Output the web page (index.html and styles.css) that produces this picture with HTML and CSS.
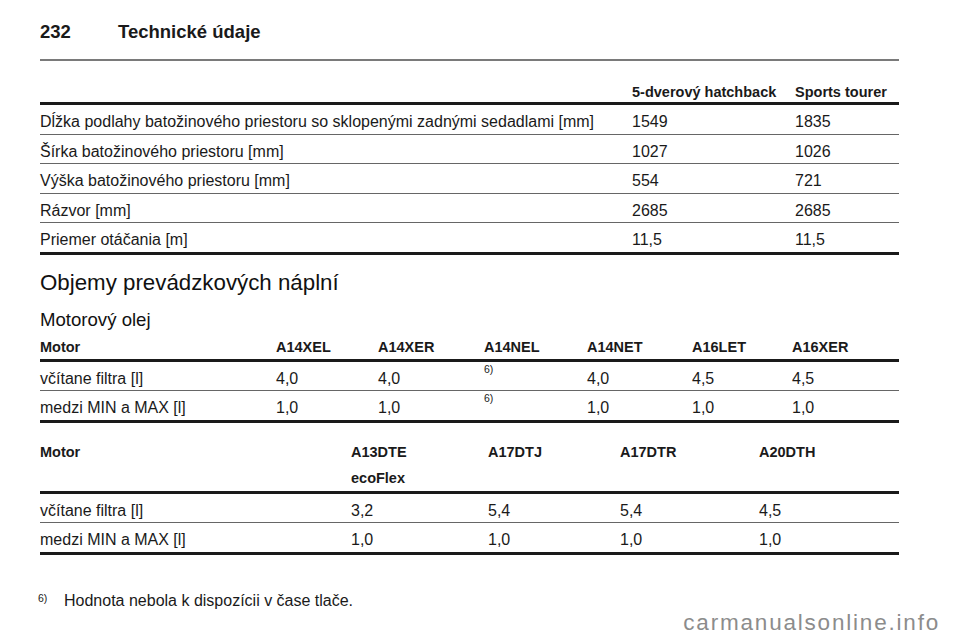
FILE: index.html
```html
<!DOCTYPE html>
<html lang="sk">
<head>
<meta charset="utf-8">
<title>Technické údaje</title>
<link rel="stylesheet" href="styles.css">
</head>
<body>
<div class="page">
  <header class="pagehead">
    <span class="pnum">232</span>
    <span class="ptitle">Technické údaje</span>
  </header>

  <table class="t t1">
    <colgroup><col class="w592"><col class="w163"><col class="w104"></colgroup>
    <thead>
      <tr><th></th><th>5-dverový hatchback</th><th>Sports tourer</th></tr>
    </thead>
    <tbody>
      <tr><td>Dĺžka podlahy batožinového priestoru so sklopenými zadnými sedadlami [mm]</td><td>1549</td><td>1835</td></tr>
      <tr><td>Šírka batožinového priestoru [mm]</td><td>1027</td><td>1026</td></tr>
      <tr><td>Výška batožinového priestoru [mm]</td><td>554</td><td>721</td></tr>
      <tr><td>Rázvor [mm]</td><td>2685</td><td>2685</td></tr>
      <tr><td>Priemer otáčania [m]</td><td>11,5</td><td>11,5</td></tr>
    </tbody>
  </table>

  <h2 class="h2">Objemy prevádzkových náplní</h2>
  <h3 class="h3">Motorový olej</h3>

  <table class="t t2">
    <colgroup><col class="w236"><col class="w102"><col class="w106"><col class="w103"><col class="w105"><col class="w100"><col class="w107"></colgroup>
    <thead>
      <tr><th>Motor</th><th>A14XEL</th><th>A14XER</th><th>A14NEL</th><th>A14NET</th><th>A16LET</th><th>A16XER</th></tr>
    </thead>
    <tbody>
      <tr><td>včítane filtra [l]</td><td>4,0</td><td>4,0</td><td class="fncell"><span class="fn">6)</span></td><td>4,0</td><td>4,5</td><td>4,5</td></tr>
      <tr><td>medzi MIN a MAX [l]</td><td>1,0</td><td>1,0</td><td class="fncell"><span class="fn">6)</span></td><td>1,0</td><td>1,0</td><td>1,0</td></tr>
    </tbody>
  </table>

  <table class="t t3">
    <colgroup><col class="w311"><col class="w137"><col class="w132"><col class="w139"><col class="w140"></colgroup>
    <thead>
      <tr><th>Motor</th><th>A13DTE<br>ecoFlex</th><th>A17DTJ</th><th>A17DTR</th><th>A20DTH</th></tr>
    </thead>
    <tbody>
      <tr><td>včítane filtra [l]</td><td>3,2</td><td>5,4</td><td>5,4</td><td>4,5</td></tr>
      <tr><td>medzi MIN a MAX [l]</td><td>1,0</td><td>1,0</td><td>1,0</td><td>1,0</td></tr>
    </tbody>
  </table>

  <div class="footnote">
    <span class="fnmark">6)</span>
    <span class="fntext">Hodnota nebola k dispozícii v čase tlače.</span>
  </div>
</div>
<div class="watermark">carmanualsonline.info</div>
</body>
</html>
```

FILE: styles.css
```css
html, body {
  margin: 0;
  padding: 0;
  background: #ffffff;
}

body {
  font-family: "Liberation Sans", Arial, Helvetica, sans-serif;
  color: #1a1a1a;
  width: 960px;
  height: 642px;
  overflow: hidden;
}

.page {
  padding: 0 61px 0 40px;
}

.pagehead {
  display: flex;
  padding-top: 20.5px;
  margin-bottom: 16.5px;
  font-weight: bold;
  font-size: 18.5px;
  line-height: 22px;
}

.pnum {
  width: 78px;
}

.t {
  width: 859px;
  table-layout: fixed;
  border-collapse: separate;
  border-spacing: 0;
}

.t th {
  font-weight: bold;
  font-size: 14.5px;
  line-height: 18px;
  text-align: left;
  vertical-align: top;
  padding: 0;
  border-bottom: 3px solid #1a1a1a;
  white-space: nowrap;
}

.t td {
  font-size: 16px;
  line-height: 18px;
  text-align: left;
  vertical-align: top;
  padding: 8px 0 2.5px;
  border-bottom: 1px solid #666666;
  white-space: nowrap;
}

.t tbody tr:last-child td {
  border-bottom: 3px solid #1a1a1a;
}

.t td.fncell {
  padding-top: 2px;
}

.fn {
  display: inline-block;
  vertical-align: top;
  font-size: 10.5px;
  line-height: 10px;
}

.t1 {
  border-top: 2px solid #7a7a7a;
}

.t1 th {
  padding: 21.5px 0 1.5px;
}

.t2 th {
  padding: 7px 0 2.8px;
}

.t3 {
  margin-top: 16px;
}

.t3 th {
  line-height: 26px;
  padding: 0;
}

.w592 { width: 592px; }
.w163 { width: 163px; }
.w104 { width: 104px; }
.w236 { width: 236px; }
.w102 { width: 102px; }
.w106 { width: 106px; }
.w103 { width: 103px; }
.w105 { width: 105px; }
.w100 { width: 100px; }
.w107 { width: 107px; }
.w311 { width: 311px; }
.w137 { width: 137px; }
.w132 { width: 132px; }
.w139 { width: 139px; }
.w140 { width: 140px; }

.h2 {
  margin: 15.5px 0 0;
  font-weight: normal;
  font-size: 22.3px;
  line-height: 26px;
  color: #111111;
}

.h3 {
  margin: 13.2px 0 0;
  font-weight: normal;
  font-size: 18.6px;
  line-height: 22px;
  color: #111111;
}

.footnote {
  display: flex;
  margin-top: 36px;
  font-size: 16px;
  line-height: 20px;
}

.fnmark {
  width: 26px;
  margin-left: -2px;
  font-size: 10.5px;
  line-height: 10px;
  padding-top: 2px;
}

.watermark {
  text-align: right;
  padding-right: 20px;
  font-size: 22.5px;
  line-height: 24px;
  letter-spacing: 1.8px;
  color: #8c8c8c;
}
```
